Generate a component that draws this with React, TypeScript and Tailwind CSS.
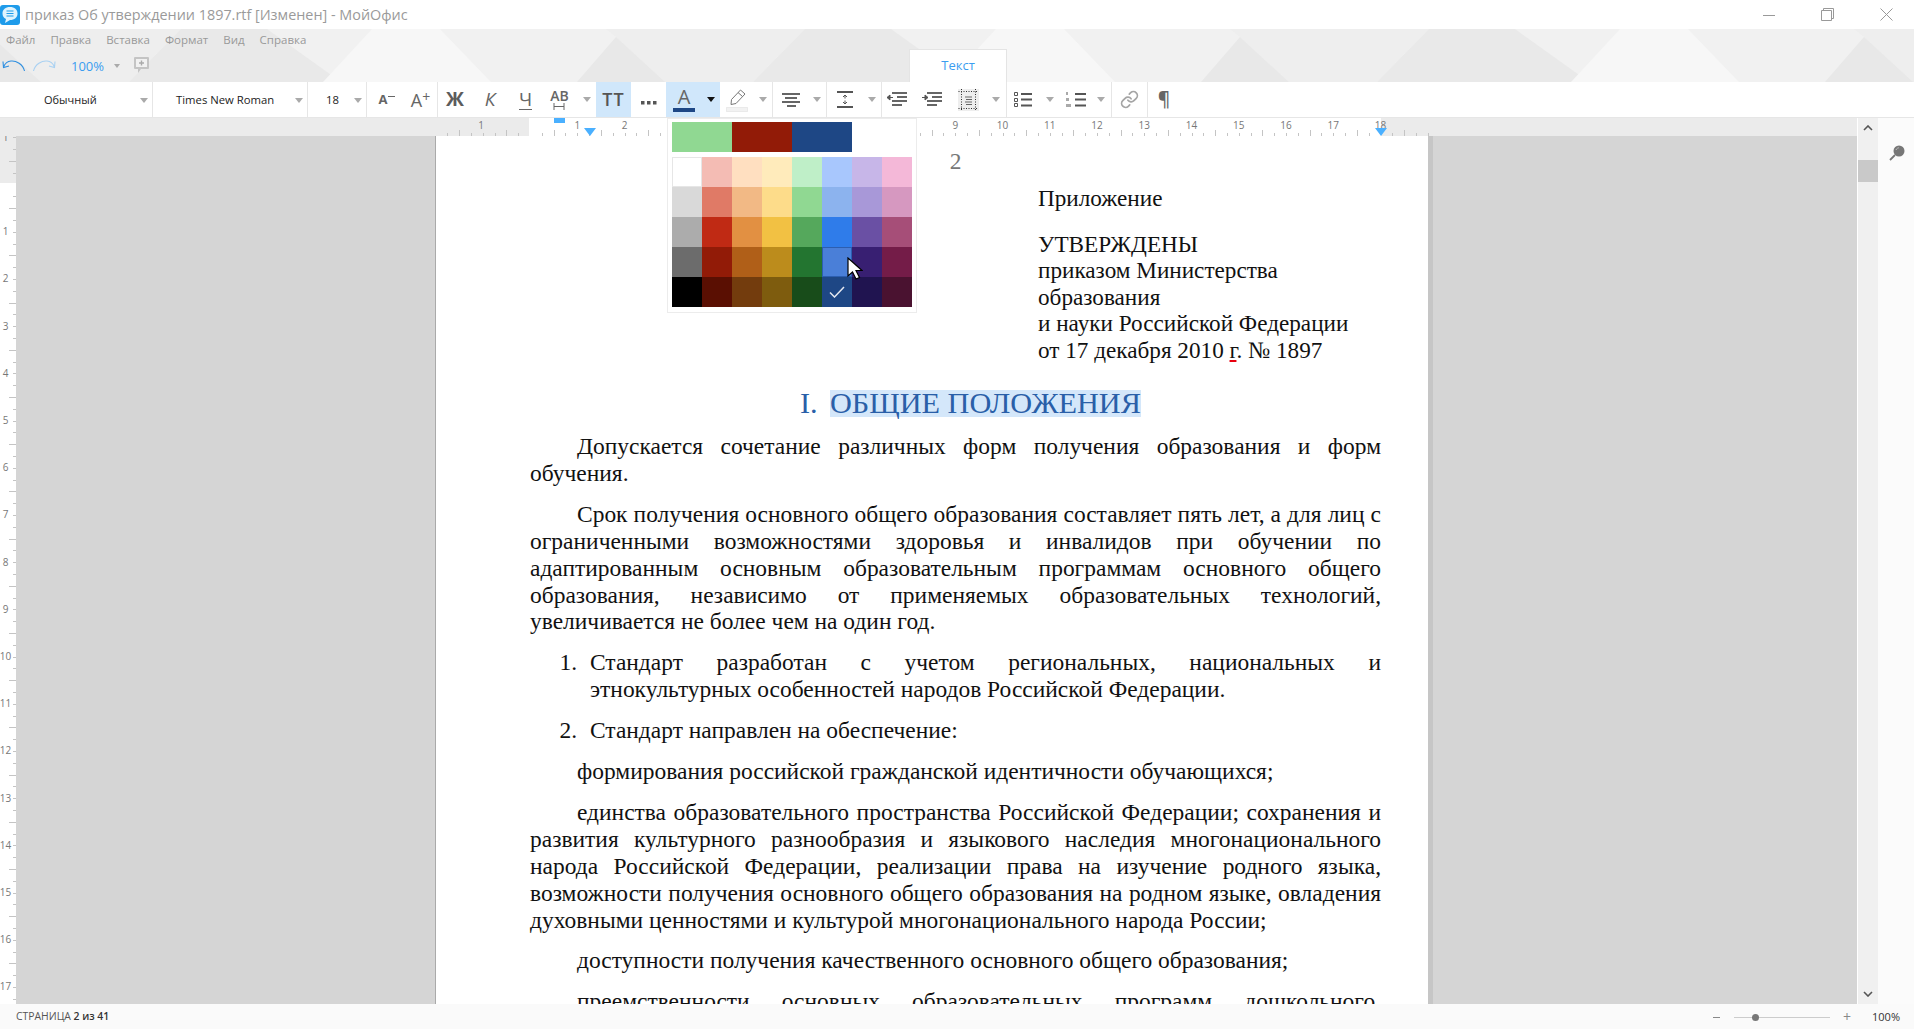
import { Link as LinkIcon } from "lucide-react"

const ui = "font-['Open_Sans',sans-serif]"

function Caret({ dark }: { dark?: boolean }) {
  return (
    <svg width="8" height="5" viewBox="0 0 8 5" className="shrink-0">
      <polygon points="0,0 8,0 4,5" fill={dark ? "#111" : "#aaa"} />
    </svg>
  )
}

function BandShapes() {
  const offsets = [-624, 0, 624, 1248]
  return (
    <svg className="absolute inset-0" width="1914" height="53" viewBox="0 29 1914 53">
      {offsets.map((dx) => (
        <g key={dx} transform={`translate(${dx} 0)`}>
          <polygon points="606,29 805,29 753,82 665,82 616,37" fill="#eeeeee" />
          <polygon points="372,29 440,29 491,82 323,82" fill="#f7f7f7" />
          <polygon points="616,37 665,82 577,82" fill="#e8e8e8" />
          <polygon points="805,29 891,29 965,82 753,82" fill="#e9e9e9" />
        </g>
      ))}
    </svg>
  )
}

function TopRuler() {
  const step = 47.25 / 4
  const ticks: number[] = []
  for (let k = -7; k <= 76; k++) ticks.push(k)
  return (
    <svg width="1857" height="18" viewBox="0 0 1857 18" className="block">
      <rect x="529" y="0" width="852" height="18" fill="#ffffff" />
      {ticks.map((k) => {
        if (k === 0 || k === 72) return null
        const x = Math.round(530 + k * step) + 0.5
        const half = Math.abs(k % 4) === 2
        return <line key={k} x1={x} x2={x} y1={half ? 12 : 15} y2={18} stroke="#c4c4c4" />
      })}
      <text x="481" y="11" textAnchor="middle" className="fill-[#777] text-[10px]">1</text>
      {Array.from({ length: 18 }, (_, i) => i + 1).map((n) => (
        <text key={n} x={530 + n * 47.25} y="11" textAnchor="middle" className="fill-[#777] text-[10px]">{n}</text>
      ))}
      <rect x="554" y="0" width="11" height="5" fill="#4ab0ff" />
      <polygon points="584,10 596,10 590,18" fill="#4ab0ff" />
      <polygon points="1375,10 1387,10 1381,18" fill="#4ab0ff" />
    </svg>
  )
}

function SideRuler() {
  const ticks: number[] = []
  for (let k = -4; k <= 69; k++) ticks.push(k)
  return (
    <svg width="16" height="868" viewBox="0 0 16 868" className="block shrink-0">
      <rect width="16" height="47" fill="#ebebeb" />
      <rect y="47" width="16" height="821" fill="#ffffff" />
      {ticks.map((k) => {
        if (k === 0) return null
        const y = Math.round(48.5 + k * 11.8) + 0.5
        const half = Math.abs(k % 4) === 2
        return <line key={k} x1={half ? 9 : 13} x2="16" y1={y} y2={y} stroke="#c4c4c4" />
      })}
      <text x="5.5" y="4.5" textAnchor="middle" className="fill-[#777] text-[10px]">1</text>
      {Array.from({ length: 17 }, (_, i) => i + 1).map((n) => (
        <text key={n} x="5.5" y={48.5 + n * 47.2 + 3.5} textAnchor="middle" className="fill-[#777] text-[10px]">{n}</text>
      ))}
    </svg>
  )
}

function Sep() {
  return <div className="h-full w-px shrink-0 bg-[#e6e6e6]" />
}

function Btn({ className, children }: { className: string; children?: React.ReactNode }) {
  return <div className={`flex h-full shrink-0 items-center justify-center ${className}`}>{children}</div>
}

function Bars({ rows }: { rows: [number, number][] }) {
  return (
    <g stroke="#666" strokeWidth="2">
      {rows.map(([a, b], i) => (
        <line key={i} x1={a} x2={b} y1={1 + i * 4} y2={1 + i * 4} />
      ))}
    </g>
  )
}

function Toolbar() {
  return (
    <div className={`flex h-[36px] w-full shrink-0 items-stretch border-b border-[#e6e6e6] bg-white text-[#222] ${ui}`}>
      <div className="flex w-[152px] shrink-0 items-center justify-between pl-[44px] pr-[4px] pt-[1px] text-[11px]">
        <span>Обычный</span>
        <Caret />
      </div>
      <Sep />
      <div className="flex w-[154px] shrink-0 items-center justify-between pl-[23px] pr-[4px] pt-[1px] text-[11.3px]">
        <span>Times New Roman</span>
        <Caret />
      </div>
      <Sep />
      <div className="flex w-[58px] shrink-0 items-center justify-between pl-[18px] pr-[4px] pt-[1px] text-[11.3px]">
        <span>18</span>
        <Caret />
      </div>
      <Sep />
      <Btn className="w-[35px] pl-[5px] text-[#666]">
        <span className="text-[13px] font-bold">A</span>
        <span className="ml-[1px] h-px w-[7px] -translate-y-[3px] bg-[#666]" />
      </Btn>
      <Btn className="w-[35px] pl-[2px] text-[#666]">
        <span className="text-[18px] leading-none">A</span>
        <span className="-translate-y-[3px] text-[14px] leading-none">+</span>
      </Btn>
      <Sep />
      <Btn className="w-[34px] text-[19px] font-bold text-[#5c5c5c]">Ж</Btn>
      <Btn className="w-[38px] pr-[2px] text-[19px] italic text-[#666]">К</Btn>
      <Btn className="w-[31px] text-[#666]">
        <div className="flex flex-col items-center">
          <span className="text-[19px] leading-[20px]">Ч</span>
          <span className="h-px w-[13px] bg-[#666]" />
        </div>
      </Btn>
      <Btn className="w-[37px] text-[#666]">
        <div className="flex flex-col items-center">
          <span className="text-[14px] font-semibold leading-[14px]">AB</span>
          <svg width="12" height="7" viewBox="0 0 12 7">
            <path d="M1 0v7M11 0v7M1 3.5h10" stroke="#666" fill="none" />
          </svg>
        </div>
      </Btn>
      <Btn className="w-[18px]">
        <Caret />
      </Btn>
      <Btn className="w-[35px] bg-[#d0e7fb] text-[18px] font-semibold tracking-[1px] text-[#555]">TT</Btn>
      <Btn className="w-[35px] pt-[6px]">
        <svg width="16" height="4" viewBox="0 0 16 4">
          <path d="M0 0h3.500v3.500H0zM6 0h3.500v3.500H6zM12 0h3.500v3.500H12z" fill="#555" />
        </svg>
      </Btn>
      <Btn className="w-[36px] bg-[#d0e7fb]">
        <div className="flex flex-col items-center">
          <span className="text-[20px] leading-[20px] text-[#666]">A</span>
          <span className="mt-[1px] h-[4px] w-[22px] bg-[#1e4785]" />
        </div>
      </Btn>
      <Btn className="w-[18px] bg-[#d0e7fb]">
        <Caret dark />
      </Btn>
      <Btn className="w-[34px]">
        <svg width="22" height="24" viewBox="0 0 22 24">
          <path d="M14.5 2l4.5 4-9 9.500-5 1 .5-5z" fill="#fff" stroke="#777" />
          <path d="M12 4.500l4.500 4" stroke="#777" fill="none" />
          <rect x="0.500" y="19.500" width="21" height="4" fill="#f2f2f2" stroke="#ddd" strokeDasharray="1 1" />
        </svg>
      </Btn>
      <Btn className="w-[18px]">
        <Caret />
      </Btn>
      <Sep />
      <Btn className="w-[34px] pl-[2px]">
        <svg width="18" height="14" viewBox="0 0 18 14">
          <Bars rows={[[0, 18], [3, 15], [0, 18], [5, 14]]} />
        </svg>
      </Btn>
      <Btn className="w-[19px]">
        <Caret />
      </Btn>
      <Sep />
      <Btn className="w-[35px]">
        <svg width="16" height="17" viewBox="0 0 16 17">
          <path d="M0 1h16M0 16h16" stroke="#555" strokeWidth="2" />
          <path d="M8 5v2.500M8 9.500V12M6 6l2-2 2 2M6 11l2 2 2-2" stroke="#555" fill="none" />
        </svg>
      </Btn>
      <Btn className="w-[19px]">
        <Caret />
      </Btn>
      <Sep />
      <Btn className="w-[30px]">
        <svg width="20" height="15" viewBox="0 0 20 15">
          <Bars rows={[[5, 20], [10, 20], [5, 20], [5, 15]]} />
          <path d="M0 5.500h6M0 5.500l3-2.500v5z" stroke="#555" fill="#555" strokeWidth="1" />
        </svg>
      </Btn>
      <Btn className="w-[40px]">
        <svg width="20" height="15" viewBox="0 0 20 15">
          <Bars rows={[[5, 20], [10, 20], [5, 20], [5, 15]]} />
          <path d="M0 5.500h6M6 5.500l-3-2.500v5z" stroke="#555" fill="#555" strokeWidth="1" />
        </svg>
      </Btn>
      <Btn className="w-[33px]">
        <svg width="21" height="22" viewBox="0 0 21 22">
          <rect width="21" height="22" fill="#eeeeee" />
          <path d="M0.500 2.500h20M0.500 19.500h20M3.500 0v22M17.500 0v22" stroke="#333" strokeDasharray="1 1.500" fill="none" />
          <path d="M7 8h7M8 10.500h6M7 13h7M8 15.500h6" stroke="#666" />
        </svg>
      </Btn>
      <Btn className="w-[21px]">
        <Caret />
      </Btn>
      <Sep />
      <Btn className="w-[32px]">
        <svg width="18" height="15" viewBox="0 0 18 15">
          <path d="M0.500 0.500h3v3h-3zM0.500 6.500h3v3h-3zM0.500 11.500h3v3h-3z" stroke="#555" fill="none" />
          <path d="M7 2h11M7 7.500h11M7 13.500h11" stroke="#555" strokeWidth="2" />
        </svg>
      </Btn>
      <Btn className="w-[22px]">
        <Caret />
      </Btn>
      <Btn className="w-[30px]">
        <svg width="20" height="15" viewBox="0 0 20 15">
          <path d="M1 0v3M0 6v3M2 6v3M0 12v3M2 12v3M4 12v3" stroke="#555" />
          <path d="M9 2h11M9 7.500h11M9 13.500h11" stroke="#555" strokeWidth="2" />
        </svg>
      </Btn>
      <Btn className="w-[20px]">
        <Caret />
      </Btn>
      <Sep />
      <Btn className="w-[35px]">
        <LinkIcon size={19} strokeWidth={2.2} className="text-[#a5a5a5]" />
      </Btn>
      <Sep />
      <Btn className="w-[32px] text-[19px] font-semibold text-[#666]">¶</Btn>
    </div>
  )
}

const swatches = [
  ["#ffffff", "#f4bcb4", "#ffdfc0", "#ffebbb", "#bfefc8", "#a8c7fd", "#c7b6e8", "#f4b8d8"],
  ["#d9d9d9", "#e07a66", "#f2b985", "#fddc8a", "#90d892", "#8cb3ee", "#a898d8", "#d698c0"],
  ["#acacac", "#c02a14", "#e29042", "#f2c143", "#55a85c", "#2f7cea", "#6a50a4", "#a64e78"],
  ["#6c6c6c", "#921b07", "#b05f18", "#bc8c1c", "#237530", "#4a7fd8", "#381f72", "#741c48"],
  ["#000000", "#5a0f02", "#733c0d", "#7e5c0e", "#184c1a", "#1e4785", "#201450", "#4a1230"],
]

function ColorPopup() {
  return (
    <div className="absolute left-[667px] top-[118px] h-[195px] w-[250px] border border-[#ececec] bg-white pl-[4px] pt-[3px]">
      <div className="flex">
        {["#90d892", "#921b07", "#1e4785"].map((c) => (
          <div key={c} className="h-[30px] w-[60px]" style={{ backgroundColor: c }} />
        ))}
      </div>
      <div className="mt-[5px] grid w-[240px] grid-cols-8">
        {swatches.flat().map((c, i) => (
          <div
            key={i}
            className={`flex h-[30px] w-[30px] items-center justify-center ${i === 0 ? "border border-[#e6e6e6]" : ""} ${i === 29 ? "border border-[#2c5eb0]" : ""}`}
            style={{ backgroundColor: c }}
          >
            {i === 37 && (
              <svg width="16" height="12" viewBox="0 0 16 12">
                <path d="M1 6.500l4.500 4.500L15 1" stroke="#e4e8f0" strokeWidth="1.500" fill="none" />
              </svg>
            )}
          </div>
        ))}
      </div>
      <svg width="16" height="24" viewBox="0 0 16 24" className="absolute left-[179px] top-[138px]">
        <path d="M1 1v18l4.500-4 3.500 7 3.500-1.500-3.500-7h6z" fill="#fff" stroke="#000" strokeWidth="1.200" />
      </svg>
    </div>
  )
}

const justify = "text-justify [text-align-last:justify]"

function Para({ lines }: { lines: string[] }) {
  return (
    <div className="mb-[14px]">
      {lines.map((line, i) => (
        <div key={i} className={`${i === lines.length - 1 ? "" : justify} ${i === 0 ? "pl-[47px]" : ""}`}>
          {line}
        </div>
      ))}
    </div>
  )
}

function ListItem({ n, lines }: { n: string; lines: string[] }) {
  return (
    <div className="mb-[14px] flex">
      <div className="w-[60px] shrink-0 pr-[13px] text-right">{n}</div>
      <div className="flex-1">
        {lines.map((line, i) => (
          <div key={i} className={i === lines.length - 1 ? "" : justify}>
            {line}
          </div>
        ))}
      </div>
    </div>
  )
}

function Page() {
  return (
    <div className="ml-[419px] h-[1200px] w-[993px] shrink-0 border-l border-[#aaa] bg-white pl-[94px] pr-[47px] pt-[12px] font-['Liberation_Serif',serif] text-[23.47px] leading-[26.9px] text-[#111] shadow-[5px_0_0_#c6c6c6]">
      <div className="text-center text-[#777]">2</div>
      <div className="pl-[508px] text-[23.2px] leading-[26.6px]">
        <div className="mt-[10px]">Приложение</div>
        <div className="mt-[19px]">УТВЕРЖДЕНЫ</div>
        <div>приказом Министерства</div>
        <div>образования</div>
        <div>и науки Российской Федерации</div>
        <div>
          от 17 декабря 2010 <span className="underline decoration-[#e8000f] decoration-2 underline-offset-[2px]">г</span>. № 1897
        </div>
      </div>
      <div className="mb-[15.5px] mt-[27px] flex h-[27px] items-center pl-[270px] text-[30.25px] leading-[27px] text-[#2a5fa8]">
        <span className="w-[30px] shrink-0">I.</span>
        <span className="inline-block h-[27px] bg-[#d4e7fa] leading-[27px]">ОБЩИЕ ПОЛОЖЕНИЯ</span>
      </div>
      <Para lines={["Допускается сочетание различных форм получения образования и форм", "обучения."]} />
      <Para
        lines={[
          "Срок получения основного общего образования составляет пять лет, а для лиц с",
          "ограниченными возможностями здоровья и инвалидов при обучении по",
          "адаптированным основным образовательным программам основного общего",
          "образования, независимо от применяемых образовательных технологий,",
          "увеличивается не более чем на один год.",
        ]}
      />
      <ListItem n="1." lines={["Стандарт разработан с учетом региональных, национальных и", "этнокультурных особенностей народов Российской Федерации."]} />
      <ListItem n="2." lines={["Стандарт направлен на обеспечение:"]} />
      <Para lines={["формирования российской гражданской идентичности обучающихся;"]} />
      <Para
        lines={[
          "единства образовательного пространства Российской Федерации; сохранения и",
          "развития культурного разнообразия и языкового наследия многонационального",
          "народа Российской Федерации, реализации права на изучение родного языка,",
          "возможности получения основного общего образования на родном языке, овладения",
          "духовными ценностями и культурой многонационального народа России;",
        ]}
      />
      <Para lines={["доступности получения качественного основного общего образования;"]} />
      <div className={`pl-[47px] ${justify}`}>преемственности основных образовательных программ дошкольного,</div>
    </div>
  )
}

export default function App() {
  return (
    <div className={`relative flex h-[1029px] w-[1914px] flex-col overflow-hidden bg-white ${ui}`}>
      <div className="flex h-[29px] shrink-0 items-center bg-white">
        <svg width="20" height="20" viewBox="0 0 20 20" className="shrink-0">
          <rect width="20" height="20" rx="3" fill="#1e9bea" />
          <path d="M10 2c4.500 0 7.500 2.600 7.500 6.500S14.500 15 10 15l-5 3 1-4C3.600 13 2.500 11 2.500 8.500 2.500 4.600 5.500 2 10 2z" fill="#dff3fd" />
          <path d="M6.500 6h7M6.500 8.500h7M6.500 11h7" stroke="#1e9bea" strokeWidth="1.200" />
        </svg>
        <span className="ml-[5px] text-[14.4px] text-[#9a9a9a]">приказ Об утверждении 1897.rtf [Изменен] - МойОфис</span>
        <div className="ml-auto flex items-center">
          <svg width="12" height="12" viewBox="0 0 12 12" className="mr-[46px]">
            <path d="M0 6.500h12" stroke="#999" />
          </svg>
          <svg width="13" height="13" viewBox="0 0 13 13" className="mr-[46px]">
            <path d="M2.500 2.500v-2h10v10h-2M0.500 2.500h10v10h-10z" stroke="#999" fill="none" />
          </svg>
          <svg width="13" height="13" viewBox="0 0 13 13" className="mr-[21px]">
            <path d="M0.500 0.500l12 12M12.500 0.500l-12 12" stroke="#999" fill="none" />
          </svg>
        </div>
      </div>

      <div className="relative h-[53px] shrink-0 bg-[#f1f1f1]">
        <BandShapes />
        <div className="relative flex h-[21px] items-center gap-[15px] pl-[6px] text-[11.5px] text-[#999]">
          <span>Файл</span>
          <span>Правка</span>
          <span>Вставка</span>
          <span>Формат</span>
          <span>Вид</span>
          <span>Справка</span>
        </div>
        <div className="relative flex h-[32px] items-center pl-[2px]">
          <svg width="23" height="12" viewBox="0 0 23 12" className="shrink-0">
            <path d="M22.500 11C21 4 14 0.500 9 1 5.500 1.300 3 3.500 1.500 7M1 1.500l0.500 6 5.500-1.500" stroke="#2f8fe0" strokeWidth="1.100" fill="none" />
          </svg>
          <svg width="23" height="12" viewBox="0 0 23 12" className="ml-[8px] shrink-0">
            <path d="M0.500 11C2 4 9 0.500 14 1c3.500 0.300 6 2.500 7.500 6M22 1.500l-0.500 6-5.500-1.500" stroke="#a9d1f2" strokeWidth="1.100" fill="none" />
          </svg>
          <span className="ml-[15px] translate-y-[1px] text-[13px] text-[#3a9df0]">100%</span>
          <svg width="6" height="4" viewBox="0 0 6 4" className="ml-[10px]">
            <polygon points="0,0 6,0 3,4" fill="#aaa" />
          </svg>
          <svg width="15" height="16" viewBox="0 0 15 16" className="ml-[14px] -translate-y-[1px]">
            <path d="M1 0h13a1 1 0 0 1 1 1v10a1 1 0 0 1-1 1H7l-3 4v-4H1a1 1 0 0 1-1-1V1a1 1 0 0 1 1-1z" fill="#c4c4c4" />
            <rect x="2" y="2" width="11" height="8" fill="#f1f1f1" />
            <path d="M7.500 3.500v5M5 6h5" stroke="#aaa" strokeWidth="1.400" />
          </svg>
        </div>
        <div className="absolute left-[909px] top-[20px] flex h-[33px] w-[98px] items-center justify-center border border-b-0 border-[#e4e4e4] bg-white text-[13px] text-[#3a9df0]">
          Текст
        </div>
      </div>

      <Toolbar />

      <div className="flex min-h-0 flex-1">
        <div className="flex w-[1857px] shrink-0 flex-col">
          <div className="h-[18px] shrink-0 bg-[#ebebeb]">
            <TopRuler />
          </div>
          <div className="flex min-h-0 flex-1">
            <SideRuler />
            <div className="min-w-0 flex-1 overflow-hidden bg-[#d5d5d5]">
              <Page />
            </div>
          </div>
        </div>
        <div className="flex w-[21px] shrink-0 flex-col items-center border-l border-white bg-[#f0f0f0]">
          <svg width="10" height="6" viewBox="0 0 10 6" className="mt-[7px] shrink-0">
            <path d="M1 5l4-4 4 4" stroke="#555" strokeWidth="1.600" fill="none" />
          </svg>
          <div className="mt-[29px] h-[22px] w-full shrink-0 bg-[#c9c9c9]" />
          <svg width="10" height="6" viewBox="0 0 10 6" className="mb-[7px] mt-auto shrink-0">
            <path d="M1 1l4 4 4-4" stroke="#555" strokeWidth="1.600" fill="none" />
          </svg>
        </div>
        <div className="flex flex-1 justify-center bg-[#fbfbfb] pl-[2px] pt-[27px]">
          <svg width="16" height="16" viewBox="0 0 16 16">
            <circle cx="10" cy="6" r="5.500" fill="#777" />
            <path d="M6 10l-5 5" stroke="#777" strokeWidth="1.800" />
            <path d="M7 5c.5-1.500 1.800-2.200 3-2.200" stroke="#bbb" fill="none" />
          </svg>
        </div>
      </div>

      <div className="flex h-[25px] shrink-0 items-center bg-[#fafafa] pt-[1px] text-[10.4px] text-[#555]">
        <span className="ml-[16px]">
          СТРАНИЦА <span className="font-semibold text-[#333]">2 из 41</span>
        </span>
        <div className="ml-auto flex items-center">
          <span className="h-px w-[7px] bg-[#888]" />
          <div className="relative ml-[14px] h-px w-[96px] bg-[#ccc]">
            <span className="absolute left-[18px] top-[-3px] h-[7px] w-[7px] rounded-full bg-[#777]" />
          </div>
          <span className="ml-[13px] text-[14px] leading-none text-[#888]">+</span>
          <span className="ml-[21px] mr-[14px] text-[11px] text-[#333]">100%</span>
        </div>
      </div>

      <ColorPopup />
    </div>
  )
}
